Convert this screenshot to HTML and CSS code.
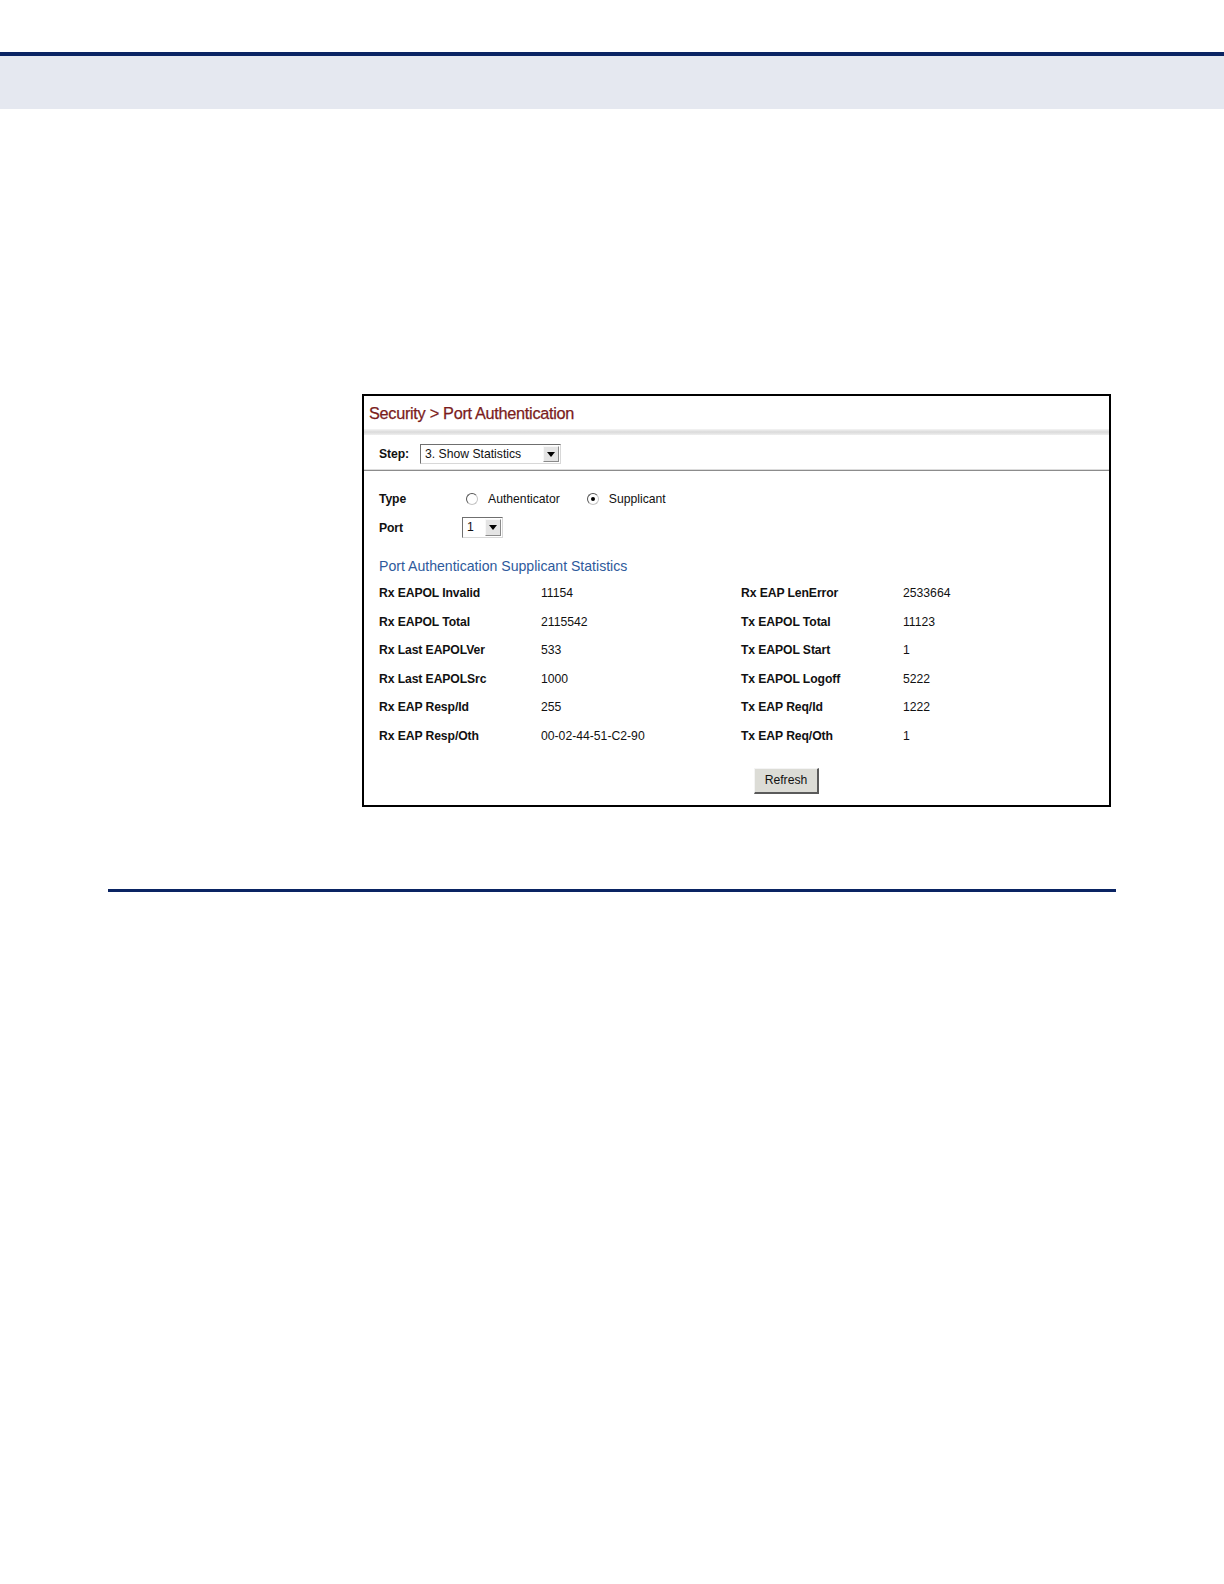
FILE: index.html
```html
<!DOCTYPE html>
<html>
<head>
<meta charset="utf-8">
<link rel="stylesheet" href="styles.css">
</head>
<body>
<div class="top-rule"></div>
<div class="top-band"></div>

<div class="figure">
  <div class="shot">
    <div class="title">Security &gt; Port Authentication</div>
    <div class="title-bar"></div>
    <div class="step-row">
      <span class="lbl">Step:</span>
      <div class="select step-select">
        <span class="sel-text">3. Show Statistics</span>
        <span class="sel-btn"><svg width="8" height="5" viewBox="0 0 8 5"><path d="M0 0H8L4 5Z" fill="#000"/></svg></span>
      </div>
    </div>
    <div class="sep"></div>
    <div class="form">
      <div class="form-row type-row">
        <span class="lbl flabel">Type</span>
        <span class="radio"></span><span class="rtext">Authenticator</span>
        <span class="radio checked"></span><span class="rtext">Supplicant</span>
      </div>
      <div class="form-row port-row">
        <span class="lbl flabel">Port</span>
        <div class="select port-select">
          <span class="sel-text">1</span>
          <span class="sel-btn"><svg width="8" height="5" viewBox="0 0 8 5"><path d="M0 0H8L4 5Z" fill="#000"/></svg></span>
        </div>
      </div>
    </div>
    <div class="heading">Port Authentication Supplicant Statistics</div>
    <div class="stats">
      <span class="lbl">Rx EAPOL Invalid</span><span class="val">11154</span><span class="lbl">Rx EAP LenError</span><span class="val">2533664</span>
      <span class="lbl">Rx EAPOL Total</span><span class="val">2115542</span><span class="lbl">Tx EAPOL Total</span><span class="val">11123</span>
      <span class="lbl">Rx Last EAPOLVer</span><span class="val">533</span><span class="lbl">Tx EAPOL Start</span><span class="val">1</span>
      <span class="lbl">Rx Last EAPOLSrc</span><span class="val">1000</span><span class="lbl">Tx EAPOL Logoff</span><span class="val">5222</span>
      <span class="lbl">Rx EAP Resp/Id</span><span class="val">255</span><span class="lbl">Tx EAP Req/Id</span><span class="val">1222</span>
      <span class="lbl">Rx EAP Resp/Oth</span><span class="val">00-02-44-51-C2-90</span><span class="lbl">Tx EAP Req/Oth</span><span class="val">1</span>
    </div>
    <div class="btn-row"><span class="button">Refresh</span></div>
  </div>
</div>

<div class="bottom-rule"></div>
</body>
</html>
```

FILE: styles.css
```css
html, body {
  margin: 0;
  padding: 0;
  background: #ffffff;
  font-family: "Liberation Sans", Arial, sans-serif;
}

.top-rule {
  margin-top: 52px;
  height: 4px;
  background: #0a2463;
}
.top-band {
  height: 53px;
  background: #e5e8f0;
}

.figure {
  padding-top: 285px;
  padding-left: 362px;
}

.shot {
  width: 745px;
  height: 409px;
  border: 2px solid #000;
  background: #fff;
}

.title {
  height: 33px;
  line-height: 35px;
  padding-left: 5px;
  font-size: 16.3px;
  letter-spacing: -0.3px;
  color: #7b1c1c;
  -webkit-text-stroke: 0.25px #7b1c1c;
}
.title-bar {
  height: 6px;
  background: linear-gradient(#f4f4f4, #dadada 50%, #efefef);
}

.lbl {
  font-weight: bold;
  font-size: 12.2px;
  color: #111;
  letter-spacing: -0.1px;
}

.step-row {
  display: flex;
  align-items: center;
  height: 20px;
  margin-top: 9px;
  padding-left: 15px;
}
.step-row .lbl { width: 41px; }

.select {
  display: flex;
  align-items: stretch;
  height: 20px;
  box-sizing: border-box;
  border: 1px solid #6f6f6f;
  border-right-color: #d8d8d8;
  border-bottom-color: #d8d8d8;
  background: #fff;
}
.sel-text {
  flex: 1;
  font-size: 12.2px;
  line-height: 18px;
  padding-left: 4px;
  color: #111;
}
.sel-btn {
  width: 16px;
  margin: 1px;
  box-sizing: border-box;
  background: #e4e4e4;
  border: 1px solid #f8f8f8;
  border-right-color: #8a8a8a;
  border-bottom-color: #8a8a8a;
  display: flex;
  align-items: center;
  justify-content: center;
}
.step-select { width: 141px; }
.port-select { width: 41px; height: 21px; }
.port-select .sel-text { line-height: 19px; }

.sep {
  margin-top: 5px;
  height: 1px;
  background: #8c8c8c;
  border-top: 1px solid #dcdcdc;
}

.form {
  padding-left: 15px;
  padding-top: 18px;
}
.form-row {
  display: flex;
  align-items: center;
}
.type-row { height: 20px; }
.port-row { height: 21px; margin-top: 8px; }
.flabel { width: 87px; }
.port-row .flabel { width: 83px; }

.radio {
  width: 12px;
  height: 12px;
  box-sizing: border-box;
  border-radius: 50%;
  border: 1px solid #c4c4c4;
  border-left-color: #555;
  border-top-color: #555;
  background: #fff;
  position: relative;
  margin-right: 10px;
}
.radio.checked::after {
  content: "";
  position: absolute;
  left: 3px;
  top: 3px;
  width: 4px;
  height: 4px;
  border-radius: 50%;
  background: #000;
}
.rtext {
  font-size: 12.2px;
  color: #111;
  margin-right: 27px;
}

.heading {
  padding-left: 15px;
  margin-top: 19px;
  height: 18px;
  line-height: 18px;
  font-size: 14.1px;
  color: #2e5a9c;
}

.stats {
  display: grid;
  grid-template-columns: 162px 200px 162px 1fr;
  grid-auto-rows: 28.5px;
  align-items: center;
  padding-left: 15px;
  margin-top: 4px;
}
.val {
  font-size: 12.2px;
  color: #111;
}

.btn-row {
  padding-left: 390px;
  margin-top: 18px;
}
.button {
  display: inline-block;
  width: 65px;
  height: 26px;
  box-sizing: border-box;
  line-height: 23px;
  text-align: center;
  font-size: 12.2px;
  color: #111;
  background: #dcdcd6;
  border: 1px solid #f4f4f4;
  border-right: 2px solid #5a5a5a;
  border-bottom: 2px solid #5a5a5a;
}

.bottom-rule {
  margin-top: 82px;
  margin-left: 108px;
  width: 1008px;
  height: 3px;
  background: #0a2463;
}
```
